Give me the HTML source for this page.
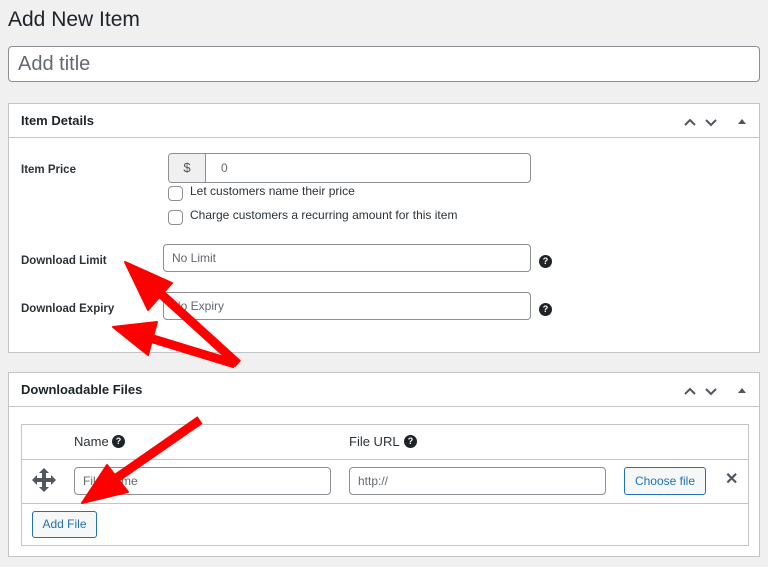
<!DOCTYPE html>
<html><head><meta charset="utf-8"><style>
*{box-sizing:border-box;margin:0;padding:0}
body{width:768px;height:567px;background:#f0f0f1;font-family:"Liberation Sans",sans-serif;color:#1d2327;position:relative;overflow:hidden}
.abs{position:absolute}
h1{position:absolute;left:8px;top:8px;font-size:21px;font-weight:400;color:#1d2327}
.title{left:8px;top:46px;width:752px;height:36px;border:1px solid #8c8f94;border-radius:4px;background:#fff;font-size:20px;color:#646970;padding:6px 9px}
.panel{background:#fff;border:1px solid #c3c4c7}
.ph{position:absolute;left:0;right:0;top:0;height:34px;border-bottom:1px solid #c3c4c7;font-size:13px;font-weight:bold;padding:9px 12px}
.lbl{font-size:11.5px;font-weight:bold;color:#2c3338}
.inp{background:#fff;border:1px solid #8c8f94;border-radius:4px;font-size:12px;color:#646970;padding:6px 8px}
.cb{width:15px;height:15px;border:1px solid #8c8f94;border-radius:4px;background:#fff}
.t{font-size:12px;color:#2c3338}
.q{width:13px;height:13px;border-radius:50%;background:#1d2327;color:#fff;font-size:9px;font-weight:bold;text-align:center;line-height:13px}
.btn{border:1px solid #2271b1;border-radius:3px;background:#f6f7f7;color:#2271b1;font-size:12px;text-align:center}
</style></head><body>
<h1>Add New Item</h1>
<div class="abs title">Add title</div>

<div class="abs panel" style="left:8px;top:103px;width:752px;height:250px">
<div class="ph">Item Details</div>
<svg class="abs" style="left:674px;top:12px" width="70" height="12"><path d="M2 9 L7 4 L12 9" stroke="#50575e" stroke-width="2" fill="none"/><path d="M23 4 L28 9 L33 4" stroke="#50575e" stroke-width="2" fill="none"/><path d="M55 8 L59 3 L63 8Z" fill="#50575e"/></svg>
<div class="abs lbl" style="left:12px;top:60px">Item Price</div>
<div class="abs" style="left:159px;top:49px;width:363px;height:30px;border:1px solid #8c8f94;border-radius:4px;background:#fff;overflow:hidden">
<div class="abs" style="left:0;top:0;width:37px;height:28px;background:#f0f0f1;border-right:1px solid #8c8f94;text-align:center;font-size:13px;color:#50575e;line-height:28px">$</div>
<div class="abs t" style="left:52px;top:7px;color:#646970">0</div></div>
<div class="abs cb" style="left:159px;top:82px"></div><div class="abs t" style="left:181px;top:80px">Let customers name their price</div>
<div class="abs cb" style="left:159px;top:106px"></div><div class="abs t" style="left:181px;top:104px">Charge customers a recurring amount for this item</div>
<div class="abs lbl" style="left:12px;top:151px">Download Limit</div>
<div class="abs inp" style="left:154px;top:140px;width:368px;height:28px">No Limit</div>
<div class="abs q" style="left:530px;top:151px">?</div>
<div class="abs lbl" style="left:12px;top:199px">Download Expiry</div>
<div class="abs inp" style="left:154px;top:188px;width:368px;height:28px">No Expiry</div>
<div class="abs q" style="left:530px;top:199px">?</div>
</div>

<div class="abs panel" style="left:8px;top:372px;width:752px;height:185px">
<div class="ph">Downloadable Files</div>
<svg class="abs" style="left:674px;top:12px" width="70" height="12"><path d="M2 9 L7 4 L12 9" stroke="#50575e" stroke-width="2" fill="none"/><path d="M23 4 L28 9 L33 4" stroke="#50575e" stroke-width="2" fill="none"/><path d="M55 8 L59 3 L63 8Z" fill="#50575e"/></svg>
<div class="abs" style="left:12px;top:51px;width:728px;height:122px;border:1px solid #c3c4c7">
<div class="abs" style="left:0;right:0;top:34px;border-top:1px solid #c3c4c7"></div>
<div class="abs" style="left:0;right:0;top:78px;border-top:1px solid #c3c4c7"></div>
<div class="abs t" style="left:52px;top:9px;font-size:13px">Name</div><div class="abs q" style="left:90px;top:10px">?</div>
<div class="abs t" style="left:327px;top:9px;font-size:13px">File URL</div><div class="abs q" style="left:382px;top:10px">?</div>
<svg class="abs" style="left:9px;top:42px" width="26" height="26" viewBox="0 0 26 26"><path d="M13 1 L18 6 H15 V11 H20 V8 L25 13 L20 18 V15 H15 V20 H18 L13 25 L8 20 H11 V15 H6 V18 L1 13 L6 8 V11 H11 V6 H8Z" fill="#50575e"/></svg>
<div class="abs inp" style="left:52px;top:42px;width:257px;height:28px">File Name</div>
<div class="abs inp" style="left:327px;top:42px;width:257px;height:28px">http://</div>
<div class="abs btn" style="left:602px;top:42px;width:82px;height:28px;line-height:26px">Choose file</div>
<div class="abs" style="left:703px;top:44px;font-size:16px;font-weight:bold;color:#50575e">✕</div>
<div class="abs btn" style="left:10px;top:86px;width:65px;height:27px;line-height:25px">Add File</div>
</div></div>

<svg class="abs" style="left:0;top:0" width="768" height="567">
<g fill="#ff0000" stroke="#ff0000" stroke-linejoin="round">
<line x1="238" y1="364" x2="150" y2="284" stroke-width="9"/>
<path d="M125 262 L172 283 L148 310Z" stroke-width="2"/>
<line x1="235" y1="364" x2="150" y2="338" stroke-width="9"/>
<path d="M113 327 L157 322 L148 355Z" stroke-width="2"/>
<line x1="200" y1="420" x2="105" y2="486" stroke-width="9"/>
<path d="M82 503 L107 465 L128 492Z" stroke-width="2"/>
</g></svg>
</body></html>
